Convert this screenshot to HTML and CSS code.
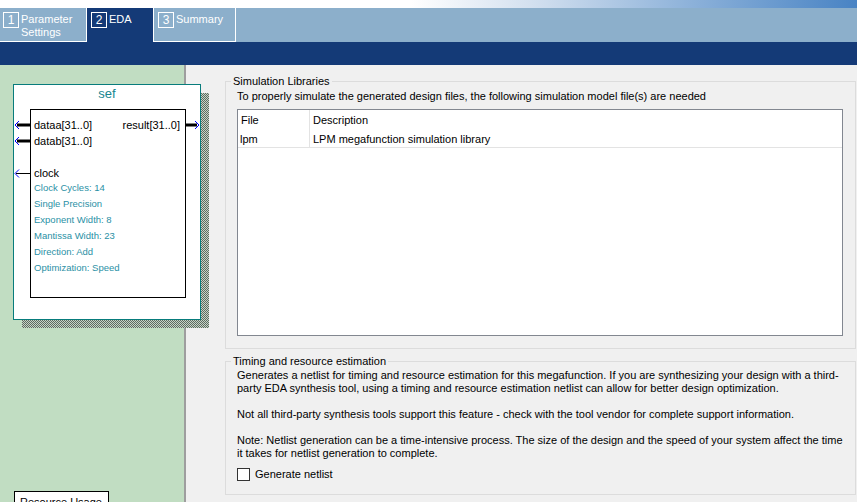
FILE: index.html
```html
<!DOCTYPE html>
<html lang="en">
<head>
    <meta charset="UTF-8">
    <title>MegaWizard - EDA</title>
    <link rel="stylesheet" href="styles.css">
</head>
<body>
    <div class="top-strip"></div>

    <!-- wizard tabs -->
    <div class="tabbar">
        <div class="tab tab-first"><span class="tab-num">1</span><span class="tab-label">Parameter<br>Settings</span></div>
        <div class="tab tab-active"><span class="tab-num">2</span><span class="tab-label">EDA</span></div>
        <div class="tab tab-last"><span class="tab-num">3</span><span class="tab-label">Summary</span></div>
    </div>
    <div class="band"></div>

    <div class="main">
        <!-- symbol preview -->
        <div class="left">
            <div class="symbol">
                <svg class="pins" width="190" height="237" viewBox="0 0 190 237">
                    <line x1="4" y1="41" x2="17" y2="41" stroke="#000" stroke-width="3"/>
                    <polyline points="6,37 2,41 6,45" fill="none" stroke="#00f"/>
                    <line x1="4" y1="57" x2="17" y2="57" stroke="#000" stroke-width="3"/>
                    <polyline points="6,53 2,57 6,61" fill="none" stroke="#00f"/>
                    <line x1="3" y1="89.5" x2="17" y2="89.5" stroke="#000"/>
                    <polyline points="6,85.5 2,89.5 6,93.5" fill="none" stroke="#00f"/>
                    <line x1="172" y1="41" x2="184" y2="41" stroke="#000" stroke-width="3"/>
                    <polyline points="182,37 186,41 182,45" fill="none" stroke="#00f"/>
                </svg>
                <div class="sym-title">sef</div>
                <div class="sym-body">
                    <div class="port-row"><span>dataa[31..0]</span><span>result[31..0]</span></div>
                    <div class="port-row"><span>datab[31..0]</span></div>
                    <div class="port-row"></div>
                    <div class="port-row"><span>clock</span></div>
                    <div class="param">Clock Cycles: 14</div>
                    <div class="param">Single Precision</div>
                    <div class="param">Exponent Width: 8</div>
                    <div class="param">Mantissa Width: 23</div>
                    <div class="param">Direction: Add</div>
                    <div class="param">Optimization: Speed</div>
                </div>
            </div>
            <button class="res-btn">Resource Usage</button>
        </div>

        <!-- EDA page -->
        <div class="right">
            <fieldset class="group group-sim">
                <legend>Simulation Libraries</legend>
                <p>To properly simulate the generated design files, the following simulation model file(s) are needed</p>
                <div class="lib-table">
                    <div class="lib-row lib-head">
                        <span class="col-file">File</span>
                        <span class="col-desc">Description</span>
                    </div>
                    <div class="lib-row lib-item">
                        <span class="col-file">lpm</span>
                        <span class="col-desc">LPM megafunction simulation library</span>
                    </div>
                </div>
            </fieldset>

            <fieldset class="group group-timing">
                <legend>Timing and resource estimation</legend>
                <p>Generates a netlist for timing and resource estimation for this megafunction. If you are synthesizing your design with a third-<br>party EDA synthesis tool, using a timing and resource estimation netlist can allow for better design optimization.</p>
                <p>Not all third-party synthesis tools support this feature - check with the tool vendor for complete support information.</p>
                <p>Note: Netlist generation can be a time-intensive process. The size of the design and the speed of your system affect the time<br>it takes for netlist generation to complete.</p>
                <label class="check-row"><span class="check-box"></span>Generate netlist</label>
            </fieldset>
        </div>
    </div>
</body>
</html>
```

FILE: styles.css
```css
body {
    margin: 0;
    width: 857px;
    height: 502px;
    overflow: hidden;
    font-family: "Liberation Sans", Arial, sans-serif;
    font-size: 11px;
    background-color: #f0f0f0;
}

.top-strip {
    height: 8px;
    background: linear-gradient(90deg, #fff 0, #fff 48%, #d3e0ef 62%, #8fb3da 80%, #4883c4 100%);
}

/* tabs */
.tabbar {
    display: flex;
    height: 34px;
    background-color: #8cafcb;
}

.tab {
    display: flex;
    align-items: flex-start;
    gap: 2px;
    box-sizing: border-box;
    height: 34px;
    padding: 4px 0 0 3px;
    color: #fff;
    border-bottom: 1px solid #fff;
}

.tab-first {
    width: 87px;
    border-right: 1px solid #fff;
}

.tab-active {
    width: 66px;
    padding-left: 4px;
    background-color: #143a77;
    border-bottom: none;
}

.tab-last {
    width: 83px;
    padding-left: 4px;
    border-left: 1px solid #fff;
    border-right: 1px solid #fff;
}

.tab-num {
    width: 14px;
    height: 14px;
    border: 1px solid #fff;
    font-size: 12px;
    line-height: 14px;
    text-align: center;
}

.tab-label {
    padding-top: 1px;
    line-height: 13px;
    font-size: 11px;
}

.band {
    height: 23px;
    background-color: #143a77;
}

.main {
    display: flex;
    height: 437px;
}

/* symbol preview */
.left {
    position: relative;
    z-index: 1;
    flex-shrink: 0;
    width: 184px;
    border-right: 2px solid #9e9e9e;
    background-color: #c1ddc2;
}

.symbol {
    position: relative;
    width: 186px;
    height: 234px;
    margin: 19px 0 0 13px;
    border: 1px solid #087c7c;
    background-color: #fff;
}

.symbol::before {
    content: "";
    position: absolute;
    left: 8px;
    top: 8px;
    width: 187px;
    height: 235px;
    z-index: -1;
    background: repeating-conic-gradient(#5e6b60 0 25%, #c6d3c7 0 50%) 0 0 / 2px 2px;
}

.pins {
    position: absolute;
    left: -1px;
    top: -1px;
    overflow: visible;
}

.sym-title {
    padding-top: 1px;
    line-height: 16px;
    font-size: 13px;
    text-align: center;
    color: #16868f;
}

.sym-body {
    width: 154px;
    height: 180px;
    margin: 7px 0 0 16px;
    padding-top: 7px;
    border: 1px solid #000;
}

.port-row {
    display: flex;
    justify-content: space-between;
    height: 16px;
    padding: 0 5px 0 3px;
    line-height: 16px;
    font-size: 11px;
    color: #000;
}

.param {
    margin-top: -1px;
    margin-bottom: 1px;
    padding-left: 3px;
    line-height: 16px;
    font-size: 9.5px;
    color: #2a90a5;
}

.res-btn {
    display: block;
    width: 95px;
    height: 22px;
    margin: 171px 0 0 14px;
    padding: 0 5px;
    border: 1px solid #000;
    background-color: #fff;
    font-family: inherit;
    font-size: 11px;
    line-height: 20px;
    text-align: left;
    color: #000;
}

/* EDA page */
.right {
    flex: 1;
    padding: 10px 2px 0 39px;
}

.group {
    margin: 0;
    min-width: 0;
    border: 1px solid #dcdcdc;
    color: #000;
}

.group legend {
    margin-left: -6px;
    padding: 0 2px;
    line-height: 13px;
}

.group p {
    margin: 0 0 13px;
    line-height: 13px;
    white-space: nowrap;
}

.group-sim {
    padding: 2px 12px 12px 11px;
}

.group-sim p {
    margin-bottom: 6px;
}

.lib-table {
    height: 225px;
    border: 1px solid #828790;
    background-color: #fff;
}

.lib-row {
    display: flex;
}

.lib-head {
    line-height: 21px;
}

.lib-item {
    line-height: 16px;
    border-bottom: 1px solid #e3e3e3;
}

.col-file {
    box-sizing: border-box;
    width: 72px;
    padding-left: 3px;
    border-right: 1px solid #e3e3e3;
}

.lib-item .col-file {
    padding-left: 2px;
}

.col-desc {
    padding-left: 3px;
}

.group-timing {
    margin-top: 6px;
    padding: 1px 12px 13px 11px;
}

.check-row {
    display: flex;
    align-items: center;
    gap: 5px;
    margin-top: -5px;
    line-height: 13px;
}

.check-box {
    box-sizing: border-box;
    width: 13px;
    height: 13px;
    border: 1px solid #333;
    background-color: #fff;
}
```
